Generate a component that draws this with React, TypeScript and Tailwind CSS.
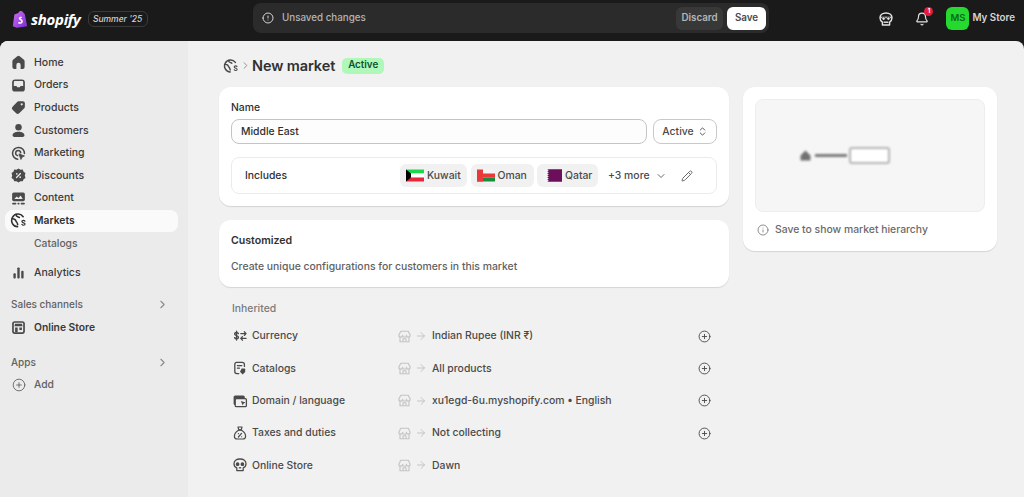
import type { ReactNode } from 'react'
import { ChevronRight, ChevronDown, ChevronsUpDown, Pencil, Info, CirclePlus, ArrowRight, Bell } from 'lucide-react'

const Home = () => (
  <svg viewBox="0 0 20 20" className="size-[17px]" fill="#4a4a4a"><path d="M8.600 2.600a2.200 2.200 0 0 1 2.800 0l5 4.100c.5.400.8 1 .8 1.700v6.800a2.300 2.300 0 0 1-2.300 2.300h-2.400v-4.700a2.500 2.500 0 0 0-5 0v4.700H5.100a2.300 2.300 0 0 1-2.300-2.300V8.400c0-.7.3-1.300.8-1.700z" /></svg>
)
const Orders = () => (
  <svg viewBox="0 0 20 20" className="size-[17px]"><rect x="2.500" y="2.800" width="15" height="14.400" rx="3.500" fill="#4a4a4a" /><path d="M4.500 5.800c0-.6.500-1 1-1h9c.5 0 1 .4 1 1v4.700h-2.600c-.7 0-1 .4-1.200 1l-.2.500H8.500l-.2-.5c-.2-.6-.6-1-1.200-1H4.500z" fill="#ebebeb" /></svg>
)
const Products = () => (
  <svg viewBox="0 0 20 20" className="size-[17px]" fill="#4a4a4a"><path d="M11 2.500h4.200c1.300 0 2.300 1 2.300 2.300V9c0 .7-.3 1.300-.7 1.800l-6 6a2.500 2.500 0 0 1-3.500 0l-4.300-4.300a2.500 2.500 0 0 1 0-3.500l6-6c.5-.4 1.200-.5 2-.5zm2.800 2.400a1.300 1.300 0 1 0 0 2.600 1.300 1.300 0 0 0 0-2.600z" /></svg>
)
const Customers = () => (
  <svg viewBox="0 0 20 20" className="size-[17px]" fill="#4a4a4a"><circle cx="10" cy="6.200" r="3.800" /><path d="M3 15.500c0-2.500 3-4 7-4s7 1.500 7 4c0 1.300-1 2-2.200 2H5.200C4 17.500 3 16.800 3 15.500z" /></svg>
)
const Marketing = () => (
  <svg viewBox="0 0 20 20" className="size-[17px]" fill="none" stroke="#4a4a4a"><path d="M9 16.800A7 7 0 1 1 17 10" strokeWidth="1.800" strokeLinecap="round" /><path d="M9 12.500a3 3 0 1 1 3.600-3.300" strokeWidth="1.800" strokeLinecap="round" /><path d="M10.500 10.500l6.500 2.400-2.800 1.300-1.300 2.800z" fill="#4a4a4a" strokeWidth="1" strokeLinejoin="round" /></svg>
)
const Discounts = () => (
  <svg viewBox="0 0 20 20" className="size-[17px]"><path d="M10 1.800l2.300 1.400 2.700-.2 1 2.500 2.200 1.600-.8 2.900.8 2.800-2.200 1.600-1 2.500-2.700-.2-2.300 1.500-2.300-1.500-2.700.2-1-2.500L1.800 13l.8-2.900-.8-2.900L4 5.500l1-2.500 2.700.2z" fill="#4a4a4a" /><path d="M12.300 7.700l-4.600 4.600" stroke="#ebebeb" strokeWidth="1.500" strokeLinecap="round" /><circle cx="8" cy="8" r="1" fill="#ebebeb" /><circle cx="12" cy="12" r="1" fill="#ebebeb" /></svg>
)
const Content = () => (
  <svg viewBox="0 0 20 20" className="size-[17px]"><rect x="2.500" y="2.800" width="15" height="10.500" rx="2" fill="#4a4a4a" /><path d="M5 10.500l3-3 2 2 2.500-3 2.500 4z" fill="#ebebeb" /><rect x="2.500" y="15" width="5" height="2" rx="1" fill="#4a4a4a" /><rect x="8.700" y="15" width="2.600" height="2" rx="1" fill="#4a4a4a" /><rect x="12.500" y="15" width="5" height="2" rx="1" fill="#4a4a4a" /></svg>
)
const Globe = ({ color = '#303030', size = 17 }: { color?: string; size?: number }) => (
  <svg viewBox="0 0 20 20" width={size} height={size} fill="none" stroke={color} strokeWidth="1.800" strokeLinecap="round"><path d="M15.500 5.500A7.500 7.500 0 1 0 9 17.400" /><path d="M3 8c3 0 3.500 1 4 2.500s2 2 2 4.500" /><path d="M7 3c0 3 3 2.500 4 3.500" /><path d="M17.500 10.800c-.4-.6-1-.9-1.700-.9-1 0-1.800.5-1.800 1.400 0 1.900 3.700 1 3.700 2.900 0 .9-.8 1.400-1.800 1.400-.8 0-1.500-.3-1.900-1" strokeWidth="1.400" /></svg>
)
const Analytics = () => (
  <svg viewBox="0 0 20 20" className="size-[17px]" fill="#4a4a4a"><rect x="4" y="11" width="2.800" height="6" rx="1" /><rect x="8.600" y="4" width="2.800" height="13" rx="1" /><rect x="13.200" y="8" width="2.800" height="9" rx="1" /></svg>
)
const OnlineStore = () => (
  <svg viewBox="0 0 20 20" className="size-[17px]"><rect x="2.500" y="2.500" width="15" height="15" rx="3" fill="#4a4a4a" /><rect x="4.500" y="4.500" width="11" height="11" rx="1" fill="#ebebeb" /><path d="M6 5.500h8l.8 3H5.200z" fill="#4a4a4a" /><rect x="6" y="10" width="3" height="5.500" fill="#4a4a4a" /><rect x="11" y="10" width="3" height="3" fill="#4a4a4a" /></svg>
)
const StoreFaded = () => (
  <svg viewBox="0 0 20 20" className="size-[15px] shrink-0" fill="none" stroke="#c4c4c4" strokeWidth="1.500" strokeLinejoin="round"><path d="M5 3h10l2.500 5a2.500 2.500 0 0 1-5 .5 2.500 2.500 0 0 1-5 0 2.500 2.500 0 0 1-5-.5z" /><path d="M4 10.500V17h12v-6.500" /><path d="M8 17v-4h4v4" /></svg>
)
const Currency = () => (
  <svg viewBox="0 0 20 20" className="size-[16px]" fill="none" stroke="#4a4a4a" strokeWidth="1.700" strokeLinecap="round" strokeLinejoin="round"><path d="M8 7c-.3-1-1.200-1.400-2.300-1.400C4.400 5.600 3.300 6.300 3.300 7.500c0 2.500 4.800 1.400 4.800 4 0 1.200-1.100 1.900-2.400 1.900-1.100 0-2-.5-2.400-1.400M5.700 4v11" /><path d="M11 7h6.500M15.500 4.800L17.500 7l-2 2.200" /><path d="M17.500 13H11M13 10.800L11 13l2 2.200" /></svg>
)
const CatalogIcon = () => (
  <svg viewBox="0 0 20 20" className="size-[16px]" fill="none" stroke="#4a4a4a" strokeWidth="1.600" strokeLinecap="round"><path d="M8.500 17H6a2.500 2.500 0 0 1-2.500-2.500v-9A2.500 2.500 0 0 1 6 3h7a2.500 2.500 0 0 1 2.500 2.500V8" /><path d="M6.800 7h5.500M6.800 10.200h2.500" /><path d="M12 10.500h3.500a1 1 0 0 1 1 1V15l-3.200 3-3.300-3.300z" fill="#4a4a4a" stroke="none" /></svg>
)
const DomainIcon = () => (
  <svg viewBox="0 0 20 20" className="size-[16px]"><rect x="2" y="3" width="14" height="12" rx="2" fill="#4a4a4a" /><rect x="4" y="7" width="14" height="10" rx="1.500" fill="#f1f1f1" stroke="#4a4a4a" strokeWidth="1.600" /><path d="M11 10l6 2-2.500 1-1 2.500z" fill="#4a4a4a" /></svg>
)
const TaxIcon = () => (
  <svg viewBox="0 0 20 20" className="size-[16px]" fill="none" stroke="#4a4a4a" strokeWidth="1.500" strokeLinecap="round" strokeLinejoin="round"><path d="M7.500 2.500h5l-1 3.500h-3z" /><path d="M8 6.500C5 8.500 3 11.500 3 14c0 2.200 1.500 3.500 3.500 3.500h7c2 0 3.500-1.300 3.500-3.500 0-2.500-2-5.500-5-7.500z" /><path d="M12 10.500l-4 4.500M8 10.800h.1M12 14.700h.1" /></svg>
)
const ThemeIcon = () => (
  <svg viewBox="0 0 20 20" className="size-[16px]" fill="none" stroke="#4a4a4a" strokeWidth="1.600" strokeLinejoin="round"><path d="M10 2.500c4.500 0 7.500 2.500 7.500 6 0 2.800-2 4.500-3.500 5v3.500H6v-3.500c-1.500-.5-3.500-2.200-3.500-5 0-3.500 3-6 7.500-6z" /><circle cx="7" cy="9" r="1.500" fill="#4a4a4a" /><circle cx="13" cy="9" r="1.500" fill="#4a4a4a" /><path d="M8.500 13.500h3" /></svg>
)

const nav = [
  { label: 'Home', icon: <Home /> },
  { label: 'Orders', icon: <Orders /> },
  { label: 'Products', icon: <Products /> },
  { label: 'Customers', icon: <Customers /> },
  { label: 'Marketing', icon: <Marketing /> },
  { label: 'Discounts', icon: <Discounts /> },
  { label: 'Content', icon: <Content /> },
]

const inherited = [
  { label: 'Currency', icon: <Currency />, value: 'Indian Rupee (INR ₹)', add: true },
  { label: 'Catalogs', icon: <CatalogIcon />, value: 'All products', add: true },
  { label: 'Domain / language', icon: <DomainIcon />, value: 'xu1egd-6u.myshopify.com • English', add: true },
  { label: 'Taxes and duties', icon: <TaxIcon />, value: 'Not collecting', add: true },
  { label: 'Online Store', icon: <ThemeIcon />, value: 'Dawn', add: false },
]

const NavRow = ({ icon, label }: { icon: ReactNode; label: string }) => (
  <div className="flex h-[22.6px] items-center gap-[7px] pl-[5px] text-[10.500px] text-[#3a3a3a] font-medium">
    {icon}
    <span>{label}</span>
  </div>
)

export default function App() {
  return (
    <div className="h-[497px] w-[1024px] overflow-hidden bg-[#1a1a1a] text-[10.400px] text-[#303030] font-['Inter',sans-serif]">
      {/* top bar */}
      <header className="flex h-[41px] items-start">
        <div className="flex h-[38px] w-[253px] items-center pl-[12px]">
          <svg viewBox="0 0 20 22" className="h-[20px] w-[16px]">
            <defs>
              <linearGradient id="bag" x1="0" y1="0" x2="1" y2="1">
                <stop offset="0" stopColor="#d070f0" />
                <stop offset="1" stopColor="#7a2bd6" />
              </linearGradient>
            </defs>
            <path d="M3 5.500L8 3.500C9 1 11 .5 13 1.500l3 3.500 3 15L6 22 1 20z" fill="url(#bag)" />
            <path d="M12.500 8.500C11 7.800 8.500 8.300 8.500 10.300c0 2 3 2 3 3.700 0 1.300-2 1.300-3.300.5l-.5 2c2 1 5.800.7 5.800-2.700 0-2.500-3-2.700-3-3.700 0-.8 1.300-.8 2-.5z" fill="#fff" />
          </svg>
          <span className="ml-[3px] text-[15px] font-bold italic leading-none tracking-[-0.3px] text-white font-['Open_Sans',sans-serif]">shopify</span>
          <span className="ml-[7px] flex h-[15.500px] w-[60px] items-center justify-center rounded-[6px] border border-[#3a3a3a] text-[8.500px] font-medium italic text-[#d4d4d4]">Summer '25</span>
        </div>
        <div className="mt-[3px] flex h-[30px] w-[516px] items-center rounded-lg bg-[#2b2b2b] pl-[9px] pr-[3px] text-[9.800px]">
          <Info size={12} className="rotate-180 text-[#d4d4d4]" strokeWidth={2} />
          <span className="ml-[8px] text-[#b5b5b5] font-medium">Unsaved changes</span>
          <div className="ml-auto flex h-[23px] w-[47px] items-center justify-center rounded-md bg-[#383838] text-[#b5b5b5] font-semibold">Discard</div>
          <div className="ml-[4px] flex h-[23px] w-[39px] items-center justify-center rounded-md bg-white text-[#4a4a4a] font-semibold">Save</div>
        </div>
        <div className="flex h-[37px] flex-1 items-center justify-end pr-[9px]">
          <svg viewBox="0 0 20 20" className="mr-[21px] size-[16px]" fill="none" stroke="#e3e3e3" strokeWidth="1.800" strokeLinejoin="round">
            <path d="M10 2.500c4.500 0 7.500 2.500 7.500 6 0 2.800-1.500 4.500-3 5.500v3.500h-9V14c-1.500-1-3-2.700-3-5.500 0-3.500 3-6 7.500-6z" />
            <path d="M3 8h14" />
            <circle cx="7" cy="9.500" r="2.200" fill="#e3e3e3" stroke="#1a1a1a" strokeWidth="1" />
            <circle cx="13" cy="9.500" r="2.200" fill="#e3e3e3" stroke="#1a1a1a" strokeWidth="1" />
            <path d="M7 14h6" />
          </svg>
          <div className="relative mr-[17px]">
            <Bell size={14} className="text-[#e3e3e3]" strokeWidth={2} />
            <span className="absolute -right-[4px] -top-[5px] flex size-[9px] items-center justify-center rounded-full bg-[#e51c3c] text-[6px] font-bold leading-none text-white">1</span>
          </div>
          <div className="flex size-[23px] items-center justify-center rounded-md bg-[#25d92f] text-[9.500px] font-semibold text-[#0b6b20]">MS</div>
          <span className="ml-[3px] text-[9.800px] font-semibold text-[#d4d4d4]">My Store</span>
        </div>
      </header>

      <div className="flex h-[456px] overflow-hidden rounded-t-[8px] bg-[#f1f1f1]">
        {/* sidebar */}
        <aside className="w-[188px] shrink-0 bg-[#ebebeb] pl-[5px] pr-[10px] pt-[10.400px]">
          {nav.map(n => <NavRow key={n.label} icon={n.icon} label={n.label} />)}
          <div className="flex h-[22.6px] items-center gap-[7px] rounded-lg bg-[#fafafa] pl-[5px] text-[10.300px] font-semibold text-[#303030]">
            <Globe />
            <span>Markets</span>
          </div>
          <div className="flex h-[23px] items-center pl-[29px] text-[10.300px] text-[#616161] font-medium">Catalogs</div>
          <div className="mt-[6px]"><NavRow icon={<Analytics />} label="Analytics" /></div>
          <div className="mt-[10px] flex h-[22px] items-center justify-between pl-[6px] pr-[9px] text-[10px] font-medium text-[#616161]">
            <span>Sales channels</span>
            <ChevronRight size={13} className="text-[#8a8a8a]" />
          </div>
          <div className="flex h-[23px] items-center gap-[7px] pl-[5px] text-[10.300px] font-semibold text-[#3a3a3a]">
            <OnlineStore />
            <span>Online Store</span>
          </div>
          <div className="mt-[13px] flex h-[22px] items-center justify-between pl-[6px] pr-[9px] text-[10px] font-medium text-[#616161]">
            <span>Apps</span>
            <ChevronRight size={13} className="text-[#8a8a8a]" />
          </div>
          <div className="flex h-[22.6px] items-center gap-[8px] pl-[7px] text-[10.300px] font-medium text-[#616161]">
            <CirclePlus size={14} strokeWidth={1.500} />
            <span>Add</span>
          </div>
        </aside>

        {/* main */}
        <main className="flex-1 pl-[31px] pr-[27px]">
          <div className="flex h-[46px] items-center pl-[4px] pt-[3px]">
            <Globe color="#4a4a4a" size={16} />
            <ChevronRight size={11} className="ml-[1px] text-[#8a8a8a]" />
            <h1 className="ml-[1px] text-[14.500px] font-semibold tracking-[-0.1px] text-[#303030]">New market</h1>
            <span className="ml-[7px] flex h-[16px] w-[42px] items-center justify-center rounded-[5px] bg-[#aff8b9] text-[9.800px] font-semibold text-[#0c5132]">Active</span>
          </div>

          <div className="flex items-start gap-[14px]">
            <div className="w-[510px] shrink-0">
              <section className="h-[119px] rounded-xl bg-white px-[12px] pt-[15px] shadow-[0_1px_1px_rgba(0,0,0,0.12)]">
                <div className="h-[17px] leading-[12px] text-[#303030] font-medium">Name</div>
                <div className="flex gap-[6px]">
                  <div className="flex h-[25px] flex-1 items-center rounded-lg border border-[#c4c4c4] bg-[#fdfdfd] pl-[9px] font-medium text-[#303030]">Middle East</div>
                  <div className="flex h-[25px] w-[64px] items-center justify-center gap-[3px] rounded-lg border border-[#c9c9c9] bg-white font-medium text-[#4a4a4a]">
                    Active <ChevronsUpDown size={11} />
                  </div>
                </div>
                <div className="mt-[13px] flex h-[37px] items-center rounded-lg border border-[#ebebeb] pl-[13px] pr-[23px]">
                  <span className="w-[155px] font-medium text-[#303030]">Includes</span>
                  <div className="flex gap-[3.500px] font-medium text-[#4a4a4a]">
                    <div className="flex h-[23px] w-[67px] items-center gap-[3px] rounded-md bg-[#f1f1f1] pl-[6px]">
                      <svg viewBox="0 0 18 12" className="h-[13px] w-[18px]">
                        <rect width="18" height="4" fill="#19d94a" />
                        <rect y="4" width="18" height="4" fill="#fff" />
                        <rect y="8" width="18" height="4" fill="#e5263b" />
                        <path d="M0 0l5 4v4l-5 4z" fill="#000" />
                      </svg>
                      <span>Kuwait</span>
                    </div>
                    <div className="flex h-[23px] w-[63px] items-center gap-[3px] rounded-md bg-[#f1f1f1] pl-[6px]">
                      <svg viewBox="0 0 18 12" className="h-[13px] w-[18px]">
                        <rect width="18" height="4" fill="#f4f4f4" />
                        <rect y="4" width="18" height="4" fill="#e93a3a" />
                        <rect y="8" width="18" height="4" fill="#1c8a3e" />
                        <rect width="6" height="12" fill="#e93a3a" />
                      </svg>
                      <span>Oman</span>
                    </div>
                    <div className="flex h-[23px] w-[61px] items-center gap-[3px] rounded-md bg-[#f1f1f1] pl-[6px]">
                      <svg viewBox="0 0 18 12" className="h-[13px] w-[19px]">
                        <rect width="18" height="12" fill="#f3f3f3" />
                        <path d="M4 0h14v12H4l1.500-1-1.500-1 1.500-1-1.500-1 1.500-1-1.500-1 1.500-1-1.500-1 1.500-1-1.500-1 1.500-1z" fill="#6b0f5b" />
                      </svg>
                      <span>Qatar</span>
                    </div>
                  </div>
                  <span className="ml-[10px] font-medium text-[#4a4a4a]">+3 more</span>
                  <ChevronDown size={12} className="ml-[5px] text-[#6a6a6a]" />
                  <Pencil size={12} className="ml-auto text-[#6a6a6a]" />
                </div>
              </section>

              <section className="mt-[14px] h-[67px] rounded-xl bg-white px-[12px] pt-[15px] shadow-[0_1px_1px_rgba(0,0,0,0.12)]">
                <h2 className="text-[10.600px] leading-[12px] font-semibold text-[#303030]">Customized</h2>
                <p className="mt-[14px] leading-[12px] font-medium text-[#616161]">Create unique configurations for customers in this market</p>
              </section>

              <div className="mt-[16px] pl-[13px] font-medium leading-[12px] text-[#7a7a7a]">Inherited</div>
              <div className="mt-[5px]">
                {inherited.map(r => (
                  <div key={r.label} className="flex h-[32.3px] items-center pl-[13px] pr-[18px] font-medium">
                    {r.icon}
                    <span className="ml-[4px] w-[145px] text-[#4a4a4a]">{r.label}</span>
                    <StoreFaded />
                    <ArrowRight size={12} className="ml-[3px] text-[#c4c4c4]" />
                    <span className="ml-[5px] text-[#4a4a4a]">{r.value}</span>
                    {r.add && <CirclePlus size={13} className="ml-auto text-[#4a4a4a]" strokeWidth={1.700} />}
                  </div>
                ))}
              </div>
            </div>

            <section className="h-[164px] w-[254px] rounded-xl bg-white p-[12px] shadow-[0_1px_1px_rgba(0,0,0,0.12)]">
              <div className="flex h-[113px] items-center rounded-lg border border-[#ededed] bg-[#f6f6f6] pl-[44px]">
                <div className="flex items-center blur-[1px]">
                  <svg viewBox="0 0 10 10" className="size-[11px]" fill="#707070"><path d="M5 .5l4.500 4.500v4.500H.5V5z" /></svg>
                  <div className="ml-[4px] h-[2.500px] w-[32px] bg-[#7a7a7a]" />
                  <div className="ml-[2px] h-[17px] w-[41px] rounded-[3px] border-2 border-[#b4b4b4] bg-white" />
                </div>
              </div>
              <div className="mt-[10px] flex items-center gap-[6px] pl-[2px] font-medium text-[#6a6a6a]">
                <Info size={12} strokeWidth={1.500} />
                <span>Save to show market hierarchy</span>
              </div>
            </section>
          </div>
        </main>
      </div>
    </div>
  )
}
